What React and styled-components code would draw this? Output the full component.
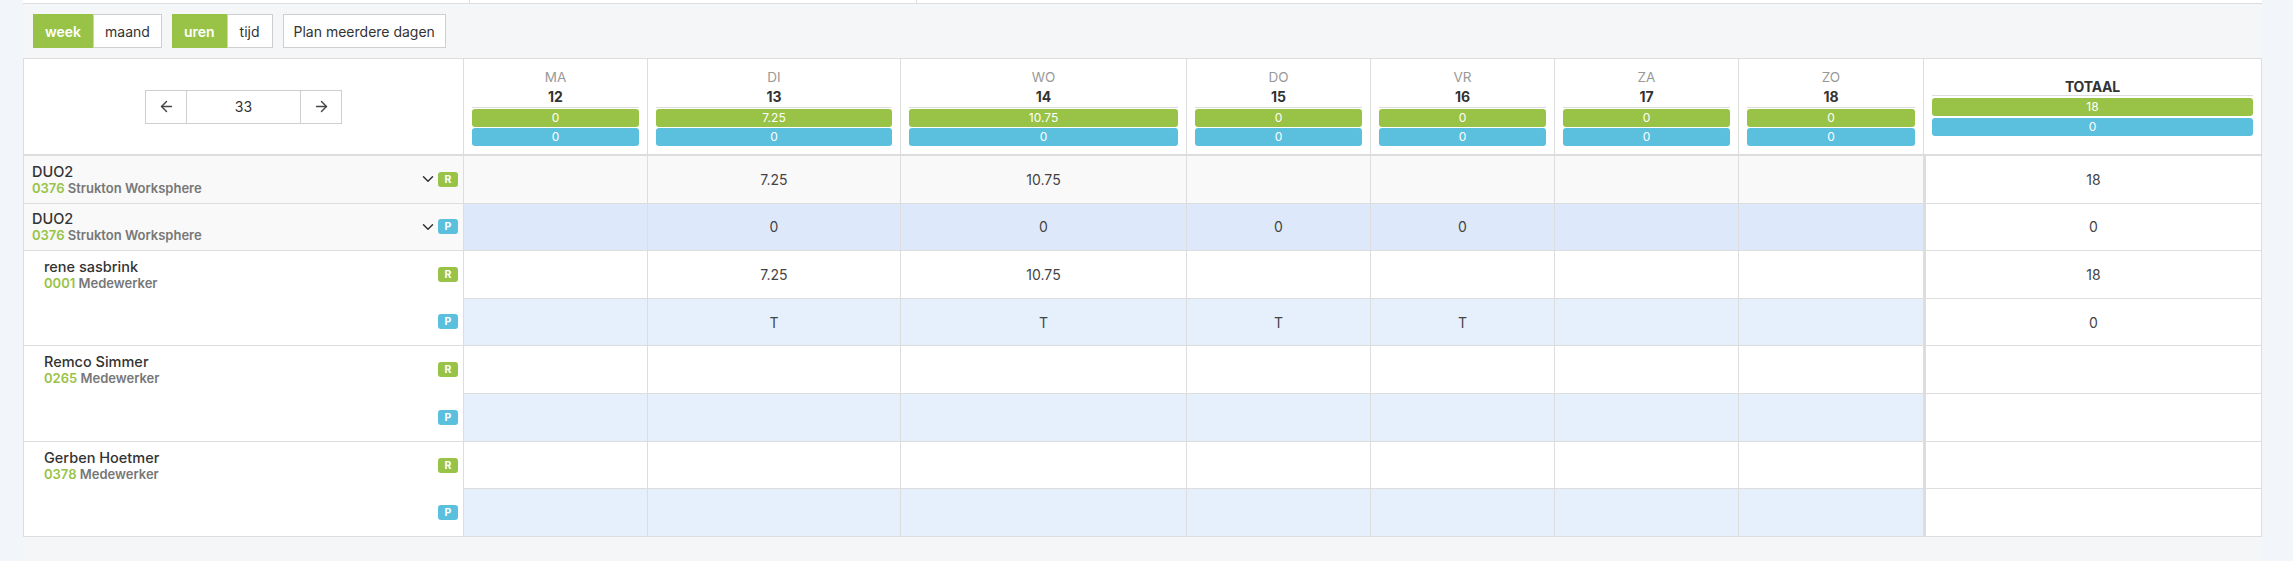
import React from 'react'
import styled, { createGlobalStyle } from 'styled-components'
import { ArrowLeft, ArrowRight, ChevronDown } from 'lucide-react'

const green = '#98c347'
const blue = '#5bc0de'
const line = '#dddddd'

const GlobalStyle = createGlobalStyle`
    html, body {
        margin: 0;
        padding: 0;
        background: #f5f6f8;
        font-family: Inter, "Noto Sans", "Liberation Sans", sans-serif;
        color: #333;
        font-size: 14px;
    }
    * {
        box-sizing: border-box;
    }
`

const Page = styled.div`
    display: flex;
    width: 100%;
    height: 561px;
    overflow: hidden;
`

const Gutter = styled.div`
    width: ${({ $width }) => $width}px;
    flex-shrink: 0;
    background: #f2f6fa;
`

const Main = styled.div`
    flex: 1;
    min-width: 0;
    background: #f5f6f8;
`

const TopStrip = styled.div`
    display: flex;
    height: 4px;
    background: #fff;
    border-bottom: 1px solid ${line};

    div {
        width: 447px;
        border-right: 1px solid ${line};
    }
`

const Toolbar = styled.div`
    display: flex;
    gap: 10px;
    padding: 10px;
`

const ButtonGroup = styled.div`
    display: flex;
`

const ToolButton = styled.button`
    height: 34px;
    padding: 0 ${({ $pad }) => $pad || 10}px;
    font-family: inherit;
    font-size: 14px;
    font-weight: ${({ $active }) => ($active ? 600 : 400)};
    color: ${({ $active }) => ($active ? '#fff' : '#333')};
    background: ${({ $active }) => ($active ? green : '#fff')};
    border: 1px solid ${({ $active }) => ($active ? green : '#cfcfcf')};
    border-radius: 0;
    cursor: pointer;
`

const Grid = styled.div`
    display: grid;
    grid-template-columns: 440px 184px 253px 286px 184px 184px 184px 185px 1fr;
    grid-template-rows: 97px;
    grid-auto-rows: 47.6px;
    border-top: 1px solid ${line};
    border-left: 1px solid ${line};
    background: #fff;
`

const HeadCell = styled.div`
    display: flex;
    flex-direction: column;
    justify-content: center;
    align-items: ${({ $stretch }) => ($stretch ? 'stretch' : 'center')};
    padding: 0 8px;
    background: #fff;
    border-right: 1px solid ${line};
    border-bottom: 2px solid ${line};
    text-align: center;
`

const Nav = styled.div`
    display: flex;
`

const NavButton = styled.button`
    width: 42px;
    height: 34px;
    display: flex;
    align-items: center;
    justify-content: center;
    background: #fff;
    border: 1px solid #cfcfcf;
    color: #444;
    padding: 0;
`

const WeekInput = styled.div`
    width: 113px;
    height: 34px;
    display: flex;
    align-items: center;
    justify-content: center;
    border: 1px solid #cfcfcf;
    border-left: 0;
    border-right: 0;
    font-size: 14px;
    color: #333;
`

const DayName = styled.div`
    font-size: 13.5px;
    line-height: 20px;
    color: #999;
`

const DayNum = styled.div`
    font-size: 14px;
    line-height: 20px;
    font-weight: 700;
    color: #333;
`

const TotalLabel = styled.div`
    font-size: 14px;
    line-height: 17px;
    font-weight: 700;
    color: #333;
    letter-spacing: -0.2px;
`

const Bars = styled.div`
    align-self: stretch;
    display: flex;
    flex-direction: column;
    gap: ${({ $gap }) => $gap}px;
    border-top: 1px solid ${line};
    padding-top: ${({ $gap }) => $gap}px;
`

const Bar = styled.div`
    height: 18px;
    line-height: 18px;
    border-radius: 3px;
    background: ${({ $kind }) => ($kind === 'p' ? blue : green)};
    color: #fff;
    font-size: 12px;
    text-align: center;
`

const NameCell = styled.div`
    display: flex;
    align-items: ${({ $person }) => ($person ? 'stretch' : 'center')};
    grid-row: ${({ $person }) => ($person ? 'span 2' : 'auto')};
    padding: 0 5px 0 ${({ $person }) => ($person ? 20 : 8)}px;
    background: ${({ $person }) => ($person ? '#fff' : '#f9f9f9')};
    border-right: 1px solid ${line};
    border-bottom: 1px solid ${line};
`

const Info = styled.div`
    flex: 1;
    padding-top: ${({ $person }) => ($person ? 7 : 0)}px;
`

const Name = styled.div`
    font-size: 14.5px;
    line-height: 17px;
    font-weight: 500;
    color: #333;
`

const Sub = styled.div`
    font-size: 13px;
    line-height: 16px;
    font-weight: 600;
    color: #777;

    span {
        color: ${green};
    }
`

const BadgeStack = styled.div`
    display: grid;
    grid-template-rows: 1fr 1fr;
    align-items: center;
`

const Badge = styled.span`
    display: inline-flex;
    align-items: center;
    justify-content: center;
    width: 20px;
    height: 15px;
    border-radius: 3px;
    background: ${({ $kind }) => ($kind === 'p' ? blue : green)};
    color: #fff;
    font-size: 10.5px;
    font-weight: 700;
`

const Chevron = styled(ChevronDown)`
    color: #333;
    margin-right: 1px;
`

const rowBg = {
    group: '#f9f9f9',
    groupPlan: '#dde9fb',
    person: '#fff',
    personPlan: '#e6f0fd',
}

const Cell = styled.div`
    display: flex;
    align-items: center;
    justify-content: center;
    font-size: 14px;
    color: #444;
    background: ${({ $bg }) => rowBg[$bg]};
    border-right: 1px solid ${line};
    border-bottom: 1px solid ${line};
`

const TotalCell = styled(Cell)`
    background: #fff;
    border-left: 2px solid ${line};
`

const days = [
    { name: 'MA', num: 12, r: '0', p: '0' },
    { name: 'DI', num: 13, r: '7.25', p: '0' },
    { name: 'WO', num: 14, r: '10.75', p: '0' },
    { name: 'DO', num: 15, r: '0', p: '0' },
    { name: 'VR', num: 16, r: '0', p: '0' },
    { name: 'ZA', num: 17, r: '0', p: '0' },
    { name: 'ZO', num: 18, r: '0', p: '0' },
]

const empty = ['', '', '', '', '', '', '']

const groups = [
    { kind: 'r', bg: 'group', values: ['', '7.25', '10.75', '', '', '', ''], total: '18' },
    { kind: 'p', bg: 'groupPlan', values: ['', '0', '0', '0', '0', '', ''], total: '0' },
]

const people = [
    {
        name: 'rene sasbrink', code: '0001',
        r: ['', '7.25', '10.75', '', '', '', ''], rTotal: '18',
        p: ['', 'T', 'T', 'T', 'T', '', ''], pTotal: '0',
    },
    { name: 'Remco Simmer', code: '0265', r: empty, rTotal: '', p: empty, pTotal: '' },
    { name: 'Gerben Hoetmer', code: '0378', r: empty, rTotal: '', p: empty, pTotal: '' },
]

function ValueCells({ values, total, bg }) {
    return (
        <>
            {values.map((v, i) => (
                <Cell key={i} $bg={bg}>{v}</Cell>
            ))}
            <TotalCell>{total}</TotalCell>
        </>
    )
}

function App() {
    return (
        <Page>
            <GlobalStyle />
            <Gutter $width={23} />
            <Main>
                <TopStrip>
                    <div />
                    <div />
                </TopStrip>
                <Toolbar>
                    <ButtonGroup>
                        <ToolButton $active $pad={11}>week</ToolButton>
                        <ToolButton $pad={11}>maand</ToolButton>
                    </ButtonGroup>
                    <ButtonGroup>
                        <ToolButton $active $pad={11}>uren</ToolButton>
                        <ToolButton $pad={12}>tijd</ToolButton>
                    </ButtonGroup>
                    <ToolButton $pad={10}>Plan meerdere dagen</ToolButton>
                </Toolbar>

                <Grid>
                    <HeadCell>
                        <Nav>
                            <NavButton><ArrowLeft size={17} strokeWidth={2} /></NavButton>
                            <WeekInput>33</WeekInput>
                            <NavButton><ArrowRight size={17} strokeWidth={2} /></NavButton>
                        </Nav>
                    </HeadCell>
                    {days.map((d) => (
                        <HeadCell key={d.name} $stretch>
                            <DayName>{d.name}</DayName>
                            <DayNum>{d.num}</DayNum>
                            <Bars $gap={1}>
                                <Bar>{d.r}</Bar>
                                <Bar $kind="p">{d.p}</Bar>
                            </Bars>
                        </HeadCell>
                    ))}
                    <HeadCell $stretch>
                        <TotalLabel>TOTAAL</TotalLabel>
                        <Bars $gap={2}>
                            <Bar>18</Bar>
                            <Bar $kind="p">0</Bar>
                        </Bars>
                    </HeadCell>

                    {groups.map((g) => (
                        <React.Fragment key={g.kind}>
                            <NameCell>
                                <Info>
                                    <Name>DUO2</Name>
                                    <Sub><span>0376</span> Strukton Worksphere</Sub>
                                </Info>
                                <Chevron size={18} strokeWidth={2} />
                                <Badge $kind={g.kind}>{g.kind.toUpperCase()}</Badge>
                            </NameCell>
                            <ValueCells values={g.values} total={g.total} bg={g.bg} />
                        </React.Fragment>
                    ))}

                    {people.map((p) => (
                        <React.Fragment key={p.code}>
                            <NameCell $person>
                                <Info $person>
                                    <Name>{p.name}</Name>
                                    <Sub><span>{p.code}</span> Medewerker</Sub>
                                </Info>
                                <BadgeStack>
                                    <Badge>R</Badge>
                                    <Badge $kind="p">P</Badge>
                                </BadgeStack>
                            </NameCell>
                            <ValueCells values={p.r} total={p.rTotal} bg="person" />
                            <ValueCells values={p.p} total={p.pTotal} bg="personPlan" />
                        </React.Fragment>
                    ))}
                </Grid>
            </Main>
            <Gutter $width={31} />
        </Page>
    )
}

export default App
